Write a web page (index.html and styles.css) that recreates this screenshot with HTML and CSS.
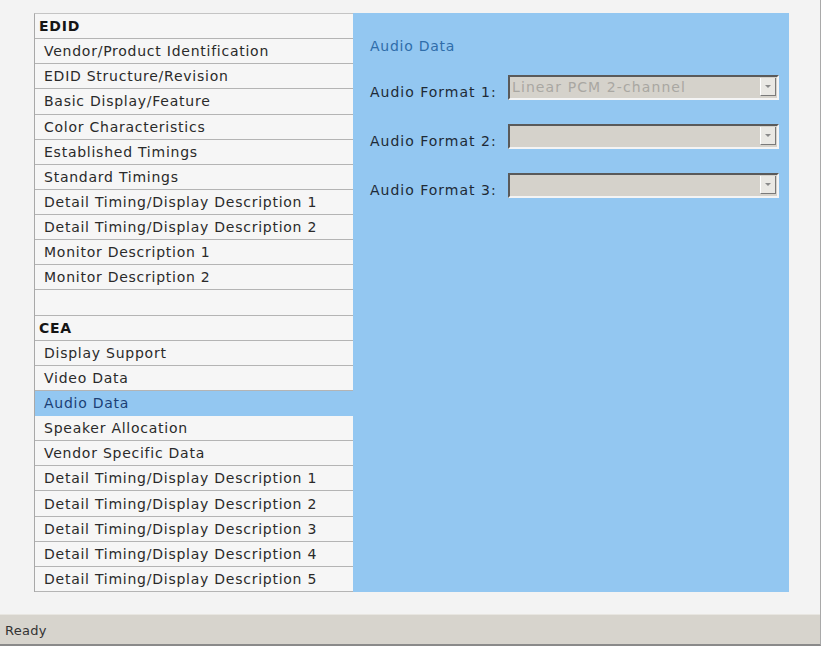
FILE: index.html
```html
<!DOCTYPE html>
<html lang="en">
<head>
  <meta charset="UTF-8">
  <title>EDID Editor</title>
  <link rel="stylesheet" href="styles.css">
</head>
<body>

  <div class="window">
    <div class="main">
      <div class="nav">
        <div class="nav-item nav-header">EDID</div>
        <div class="nav-item">Vendor/Product Identification</div>
        <div class="nav-item">EDID Structure/Revision</div>
        <div class="nav-item">Basic Display/Feature</div>
        <div class="nav-item">Color Characteristics</div>
        <div class="nav-item">Established Timings</div>
        <div class="nav-item">Standard Timings</div>
        <div class="nav-item">Detail Timing/Display Description 1</div>
        <div class="nav-item">Detail Timing/Display Description 2</div>
        <div class="nav-item">Monitor Description 1</div>
        <div class="nav-item">Monitor Description 2</div>
        <div class="nav-item"></div>
        <div class="nav-item nav-header">CEA</div>
        <div class="nav-item">Display Support</div>
        <div class="nav-item">Video Data</div>
        <div class="nav-item selected">Audio Data</div>
        <div class="nav-item">Speaker Allocation</div>
        <div class="nav-item">Vendor Specific Data</div>
        <div class="nav-item">Detail Timing/Display Description 1</div>
        <div class="nav-item">Detail Timing/Display Description 2</div>
        <div class="nav-item">Detail Timing/Display Description 3</div>
        <div class="nav-item">Detail Timing/Display Description 4</div>
        <div class="nav-item">Detail Timing/Display Description 5</div>
      </div>

      <div class="panel">
        <div class="panel-title">Audio Data</div>
        <div class="form-row">
          <label>Audio Format 1:</label>
          <div class="combo"><span class="combo-text">Linear PCM 2-channel</span><span class="combo-btn"></span></div>
        </div>
        <div class="form-row">
          <label>Audio Format 2:</label>
          <div class="combo"><span class="combo-text"></span><span class="combo-btn"></span></div>
        </div>
        <div class="form-row">
          <label>Audio Format 3:</label>
          <div class="combo"><span class="combo-text"></span><span class="combo-btn"></span></div>
        </div>
      </div>
    </div>

    <div class="statusbar">Ready</div>
  </div>

</body>
</html>
```

FILE: styles.css
```css
body {
  margin: 0;
  background-color: #ffffff;
  font-family: "DejaVu Sans", Verdana, sans-serif;
  font-size: 14px;
  letter-spacing: 0.75px;
  color: #2a2a2a;
}
.window {
  width: 821px;
  height: 646px;
  background-color: #f3f3f3;
  border-right: 1px solid #a9a9a9;
  border-bottom: 2px solid #8a8a8a;
  box-sizing: border-box;
  display: flex;
  flex-direction: column;
}
.main {
  flex: 1;
  display: flex;
  padding: 13px 31px 22px 34px;
}
.nav {
  width: 319px;
  display: grid;
  grid-template-rows: repeat(23, 1fr);
  border-left: 1px solid #a8a8a8;
  border-top: 1px solid #c4c4c4;
  box-sizing: border-box;
}
.nav-item {
  display: flex;
  align-items: center;
  padding-left: 9px;
  background-color: #f6f6f6;
  border-bottom: 1px solid #b4b4b4;
  white-space: nowrap;
}
.nav-header {
  font-weight: bold;
  padding-left: 4px;
  color: #151515;
}
.selected {
  background-color: #93c7f1;
  color: #1b3f75;
  border-bottom-color: #93c7f1;
}
.panel {
  flex: 1;
  background-color: #93c7f1;
  padding: 25px 0 0 17px;
}
.panel-title {
  color: #2f6daa;
  height: 16px;
  margin-bottom: 20px;
}
.form-row {
  display: flex;
  align-items: center;
  height: 26px;
  margin-bottom: 23px;
}
.form-row label {
  width: 138px;
  padding-top: 9px;
  letter-spacing: 1px;
  color: #1e2a36;
}
.combo {
  width: 271px;
  height: 25px;
  box-sizing: border-box;
  display: flex;
  align-items: center;
  background-color: #d5d2cb;
  border-top: 2px solid #5a5a5a;
  border-left: 2px solid #5a5a5a;
  border-bottom: 2px solid #f4f4f4;
  border-right: 2px solid #f4f4f4;
}
.combo-text {
  flex: 1;
  padding-left: 2px;
  letter-spacing: 1.1px;
  color: #a9a7a2;
}
.combo-btn {
  width: 16px;
  height: 18px;
  margin-right: 1px;
  background-color: #e9e8e4;
  border-left: 1px solid #ffffff;
  border-bottom: 1px solid #7a7a7a;
  border-right: 1px solid #7a7a7a;
  box-sizing: border-box;
  display: flex;
  align-items: center;
  justify-content: center;
}
.combo-btn::after {
  content: "";
  border-left: 3px solid transparent;
  border-right: 3px solid transparent;
  border-top: 3px solid #8a8a8a;
}
.statusbar {
  height: 30px;
  box-sizing: border-box;
  display: flex;
  align-items: center;
  padding: 2px 0 0 5px;
  background-color: #d7d4cd;
  border-top: 1px solid #e8e6e1;
  font-size: 13px;
  letter-spacing: 0.3px;
  color: #333333;
}
```
